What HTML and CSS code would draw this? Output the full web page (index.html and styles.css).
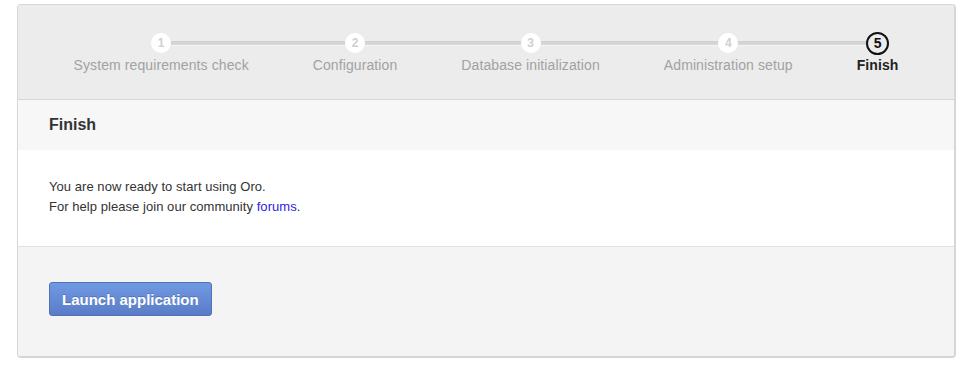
FILE: index.html
```
<!DOCTYPE html>
<html>
<head>
<meta charset="utf-8">
<link rel="stylesheet" href="styles.css">
</head>
<body>
<div class="panel">
  <div class="progress">
    <ol class="steps">
      <li class="step first">
        <div class="track"><span class="line"></span><span class="dot">1</span><span class="line"></span></div>
        <div class="label">System requirements check</div>
      </li>
      <li class="step">
        <div class="track"><span class="line"></span><span class="dot">2</span><span class="line"></span></div>
        <div class="label">Configuration</div>
      </li>
      <li class="step">
        <div class="track"><span class="line"></span><span class="dot">3</span><span class="line"></span></div>
        <div class="label">Database initialization</div>
      </li>
      <li class="step">
        <div class="track"><span class="line"></span><span class="dot">4</span><span class="line"></span></div>
        <div class="label">Administration setup</div>
      </li>
      <li class="step last active">
        <div class="track"><span class="line"></span><span class="dot">5</span><span class="line"></span></div>
        <div class="label">Finish</div>
      </li>
    </ol>
  </div>
  <div class="title">Finish</div>
  <div class="content">
    <p>You are now ready to start using Oro.</p>
    <p>For help please join our community <a href="#">forums</a>.</p>
  </div>
  <div class="footer">
    <button class="btn" type="button">Launch application</button>
  </div>
</div>
</body>
</html>
```
FILE: styles.css
```
html, body {
  margin: 0;
  padding: 0;
  background: #ffffff;
}
body {
  padding: 4px 13px 0 17px;
  font-family: "Liberation Sans", Arial, Helvetica, sans-serif;
}
.panel {
  border: 2px solid #d6d6d6;
  border-top-width: 1px;
  border-left-width: 1px;
  border-radius: 4px;
  overflow: hidden;
  background: #f4f4f4;
}
.progress {
  background: #ececec;
  border-bottom: 1px solid #d6d6d6;
  padding: 26px 0 25px;
}
.steps {
  list-style: none;
  margin: 0;
  padding: 0;
  display: flex;
  justify-content: center;
}
.step {
  display: flex;
  flex-direction: column;
  align-items: stretch;
}
.track {
  height: 24px;
  display: flex;
  align-items: center;
}
.line {
  flex: 1;
  height: 4px;
  background: linear-gradient(#d0d0d0, #dadada);
  border-bottom: 1px solid #f4f4f4;
}
.first .line:first-child,
.last .line:last-child {
  visibility: hidden;
}
.dot {
  width: 20px;
  height: 20px;
  border-radius: 50%;
  background: #ffffff;
  color: #cfcfcf;
  font-size: 12px;
  font-weight: bold;
  display: flex;
  align-items: center;
  justify-content: center;
  box-sizing: border-box;
}
.active .dot {
  width: 23px;
  height: 23px;
  border: 2px solid #111111;
  background: #ececec;
  color: #111111;
  font-size: 14px;
}
.label {
  padding: 0 32px;
  margin-top: 1px;
  font-size: 14px;
  letter-spacing: 0.1px;
  line-height: 18px;
  color: #a2a2a2;
  white-space: nowrap;
  text-align: center;
}
.active .label {
  color: #222222;
  font-weight: bold;
}
.title {
  background: #f7f7f7;
  height: 50px;
  line-height: 50px;
  padding-left: 31px;
  font-size: 16px;
  font-weight: bold;
  color: #333333;
}
.content {
  background: #ffffff;
  padding: 27px 31px 29px;
  border-bottom: 1px solid #e2e2e2;
  font-size: 13px;
  letter-spacing: 0.05px;
  line-height: 20px;
  color: #333333;
}
.content p {
  margin: 0;
}
.content a {
  color: #2f22e0;
  text-decoration: none;
}
.footer {
  background: #f4f4f4;
  padding: 35px 31px 40px;
}
.btn {
  display: block;
  height: 34px;
  padding: 0 12px;
  border: 1px solid #5171b8;
  border-radius: 3px;
  background: linear-gradient(#7199e3, #5a7cc7);
  color: #ffffff;
  font-family: "Liberation Sans", Arial, Helvetica, sans-serif;
  font-size: 15px;
  font-weight: bold;
  text-shadow: 0 -1px 0 rgba(0, 0, 0, 0.2);
  cursor: pointer;
}
```
